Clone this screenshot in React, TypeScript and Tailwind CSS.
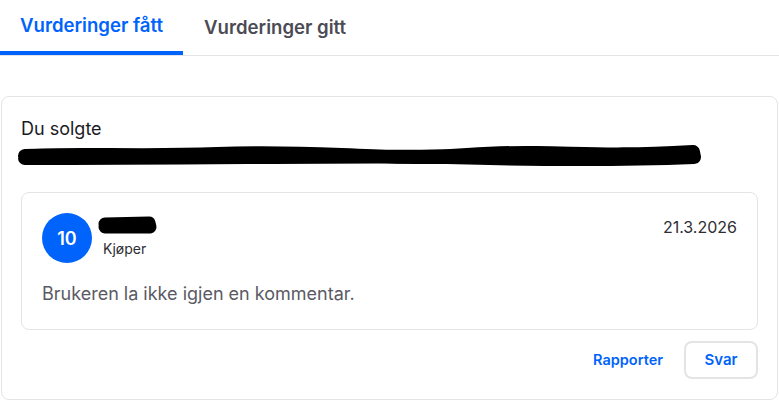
import React, { useState } from 'react';

const tabs = ['Vurderinger fått', 'Vurderinger gitt'];

function Redaction({ className, d, width, height, stroke = 11 }: { className?: string; d: string; width: number; height: number; stroke?: number }) {
  return (
    <svg className={className} width={width} height={height} viewBox={`0 0 ${width} ${height}`}>
      <path d={d} stroke="#000" strokeWidth={stroke} strokeLinecap="round" strokeLinejoin="round" fill="none" />
    </svg>
  );
}

export default function App() {
  const [active, setActive] = useState(0);

  return (
    <div className="min-h-screen bg-white text-[#464646]" style={{ fontFamily: 'Inter, "Noto Sans", sans-serif' }}>
      <div className="flex border-b border-[#e4e4e7]">
        {tabs.map((t, i) => (
          <button
            key={t}
            onClick={() => setActive(i)}
            className={
              i === active
                ? 'h-[55px] px-5 pt-px text-[18.6px] font-semibold text-[#0063fb] border-b-4 border-[#0063fb] -mb-px'
                : 'h-[55px] px-[21px] text-[18.6px] font-semibold text-[#4b4b55]'
            }
          >
            {t}
          </button>
        ))}
      </div>

      <div className="mt-[40px] ml-px w-[777px] rounded-lg border border-[#e4e4e7] px-[19px] pt-[19px] pb-[20px]">
        <p className="text-[18px] leading-[26px] text-[#1b1b1f]">Du solgte</p>
        <Redaction
          className="-ml-1 mt-[1px] block"
          width={685}
          height={24}
          stroke={14}
          d="M8 13 C 60 10, 120 14, 200 11 S 320 13, 380 14 S 460 9, 520 10 S 600 13, 676 9 L 677 14 C 600 17, 500 16, 430 14 S 200 15, 8 15"
        />

        <div className="mt-[25px] rounded-lg border border-[#e4e4e7] px-5 pt-5 pb-[22px]">
          <div className="flex items-start justify-between">
            <div className="flex items-center gap-[6px]">
              <div className="flex h-[50px] w-[50px] items-center justify-center rounded-full bg-[#0063fb] text-[18px] font-semibold text-white">
                10
              </div>
              <div className="flex flex-col">
                <Redaction className="-mt-[4px] block" width={60} height={22} stroke={13} d="M7 10 L 51 9 L 52 13 L 7 13" />
                <span className="ml-[5px] mt-[4px] text-[14px] leading-[18px] text-[#2d2d33]">Kjøper</span>
              </div>
            </div>
            <span className="mt-[2px] text-[16px] text-[#2d2d33]">21.3.2026</span>
          </div>
          <p className="mt-[18px] text-[18px] leading-[26px] text-[#5a5a64]">Brukeren la ikke igjen en kommentar.</p>
        </div>

        <div className="mt-[11px] flex items-center justify-end gap-[21px]">
          <button className="text-[14.5px] font-semibold text-[#0063fb]">Rapporter</button>
          <button className="h-[38px] w-[74px] rounded-lg border-2 border-[#e4e4e7] text-[15px] font-semibold text-[#0063fb]">
            Svar
          </button>
        </div>
      </div>
    </div>
  );
}
